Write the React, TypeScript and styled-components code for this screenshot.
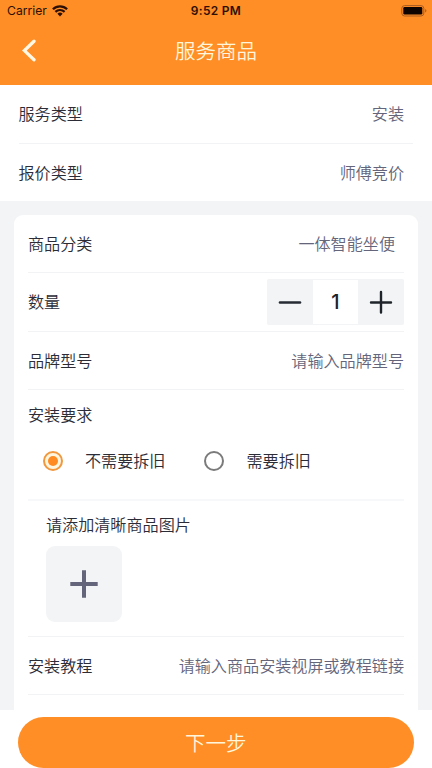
import React, { useState } from 'react';
import styled, { createGlobalStyle } from 'styled-components';

const GlobalStyle = createGlobalStyle`
  * { box-sizing: border-box; }
  body { margin: 0; overflow: hidden; }
  button { border: 0; padding: 0; font: inherit; background: none; }
`;

const Screen = styled.div`
  width: 432px;
  height: 768px;
  display: flex;
  flex-direction: column;
  overflow: hidden;
  background: #f2f4f6;
  color: #2b2c36;
  font: 350 16.1px/24px 'Noto Sans CJK SC', sans-serif;
`;

const Header = styled.header`
  flex: none;
  height: 85px;
  background: #ff8e26;
`;

const StatusBar = styled.div`
  height: 22px;
  padding: 0 5px 0 7px;
  display: grid;
  grid-template-columns: 1fr auto 1fr;
  align-items: center;
  color: #2e0f05;
  font: 400 12.2px/22px Inter, sans-serif;
`;

const Carrier = styled.div`
  display: flex;
  align-items: center;
  gap: 5px;
`;

const Clock = styled.div`
  margin-right: 2px;
  font-weight: 600;
  font-size: 11.9px;
  letter-spacing: 0.35px;
`;

const Battery = styled.div`
  display: flex;
  justify-content: flex-end;
`;

const NavBar = styled.div`
  height: 55px;
  display: grid;
  grid-template-columns: 60px 1fr 60px;
  align-items: center;
`;

const BackButton = styled.button`
  height: 24px;
  padding-left: 20px;
  display: flex;
  align-items: center;
`;

const Title = styled.h1`
  margin: 0;
  text-align: center;
  color: #fff6dc;
  font-size: 20.5px;
  line-height: 30px;
  font-weight: 350;
`;

const Summary = styled.section`
  flex: none;
  height: 116px;
  padding: 0 19px 0 18.5px;
  background: #fff;
`;

const Card = styled.section`
  flex: none;
  height: 495px;
  margin: 14px 14px 0;
  padding: 0 14px;
  border-radius: 9px 9px 0 0;
  background: #fff;
`;

const Row = styled.div<{ $inset?: number; $last?: boolean; $height?: number }>`
  height: ${(p) => p.$height ?? 58}px;
  padding-right: ${(p) => p.$inset ?? 0}px;
  display: flex;
  align-items: center;
  justify-content: space-between;
  border-bottom: ${(p) => (p.$last ? 0 : 1)}px solid #f2f3f5;
`;

const Label = styled.span`
  margin-bottom: 2px;
`;

const Value = styled(Label)`
  color: #64657a;
`;

const Stepper = styled.div`
  width: 137px;
  height: 46px;
  display: grid;
  grid-template-columns: 46px 1fr 46px;
  border-radius: 2px;
  overflow: hidden;
  background: #f2f4f6;
`;

const StepButton = styled.button`
  display: grid;
  place-items: center;
`;

const Quantity = styled.div`
  margin: 1px 0;
  display: grid;
  place-items: center;
  background: #fff;
  color: #20222a;
  font: 500 20px/44px Inter, sans-serif;
`;

const Requirements = styled.div`
  height: 111px;
  padding-top: 12px;
  border-bottom: 2px solid #f7f8f9;
`;

const Options = styled.div`
  display: flex;
  gap: 39px;
  padding: 22px 0 0 15px;
`;

const Option = styled.label`
  display: flex;
  align-items: center;
  gap: 22px;
`;

const Radio = styled.span<{ $on: boolean }>`
  width: 20px;
  height: 20px;
  display: grid;
  place-items: center;
  border: 2px solid ${(p) => (p.$on ? '#f1983f' : '#7b7b7b')};
  border-radius: 50%;
  background: ${(p) => (p.$on ? '#fff6df' : '#fff')};
`;

const Dot = styled.span`
  width: 10px;
  height: 10px;
  border-radius: 50%;
  background: #ff8b22;
`;

const Upload = styled.div`
  height: 136px;
  padding: 11px 0 0 18px;
  border-bottom: 1px solid #f2f3f5;
`;

const UploadTile = styled.button`
  width: 76px;
  height: 76px;
  margin-top: 10px;
  display: grid;
  place-items: center;
  border-radius: 9px;
  background: #f2f4f6;
`;

const Footer = styled.footer`
  flex: 1;
  padding: 7px 18.5px 0 18px;
  background: #fff;
`;

const NextButton = styled.button`
  width: 395.5px;
  height: 51px;
  padding-bottom: 1px;
  display: block;
  border-radius: 26px;
  background: #ff8e26;
  color: #fff6dc;
  font-size: 20.5px;
  line-height: 50px;
`;

const WifiIcon = () => (
  <svg width="16" height="12" viewBox="0 0 16 12">
    <g fill="none" stroke="#2e0f05" strokeWidth="2.2">
      <path d="M.9 4.2a10.1 10.1 0 0 1 14.2 0" />
      <path d="M3.4 6.9a6.5 6.5 0 0 1 9.2 0" />
    </g>
    <path d="M5.4 8.8a3.7 3.7 0 0 1 5.2 0L8 11.5Z" fill="#2e0f05" />
  </svg>
);

const BatteryIcon = () => (
  <svg width="26" height="12" viewBox="0 0 26 12">
    <rect x=".8" y=".6" width="22" height="10.4" rx="2.8" fill="none" stroke="#a85c20" />
    <rect x="2.3" y="2.1" width="19" height="7.4" rx="1.2" fill="#100400" />
    <path d="M24.2 4v3.6q1.2-.5 1.2-1.8T24.2 4Z" fill="#a85c20" />
  </svg>
);

const BackIcon = () => (
  <svg width="17" height="24" viewBox="0 0 17 24">
    <path d="M14 3.2 4.4 12.6l9.6 9.2" fill="none" stroke="#fff8e4" strokeWidth="3.3" strokeLinecap="round" strokeLinejoin="miter" />
  </svg>
);

const MinusIcon = () => (
  <svg width="24" height="24" viewBox="0 0 24 24">
    <path d="M2 12.5h20" stroke="#262b33" strokeWidth="2.6" strokeLinecap="round" />
  </svg>
);

const PlusIcon = () => (
  <svg width="24" height="24" viewBox="0 0 24 24">
    <path d="M2 12.5h20M12 2v20.5" stroke="#1f242b" strokeWidth="2.4" strokeLinecap="round" />
  </svg>
);

const AddIcon = () => (
  <svg width="28" height="28" viewBox="0 0 28 28">
    <path d="M.3 14h27.4M14 .3v27.4" stroke="#64657a" strokeWidth="4" />
  </svg>
);

const options = ['不需要拆旧', '需要拆旧'];

export default function App() {
  const [selected, setSelected] = useState(0);
  const [count, setCount] = useState(1);
  return (
    <Screen>
      <GlobalStyle />
      <Header>
        <StatusBar>
          <Carrier>Carrier <WifiIcon /></Carrier>
          <Clock>9:52 PM</Clock>
          <Battery><BatteryIcon /></Battery>
        </StatusBar>
        <NavBar>
          <BackButton aria-label="返回"><BackIcon /></BackButton>
          <Title>服务商品</Title>
        </NavBar>
      </Header>
      <Summary>
        <Row $inset={9} $height={59}><Label>服务类型</Label><Value>安装</Value></Row>
        <Row $inset={9} $height={57} $last><Label>报价类型</Label><Value>师傅竞价</Value></Row>
      </Summary>
      <Card>
        <Row $inset={9}><Label>商品分类</Label><Value>一体智能坐便</Value></Row>
        <Row $height={59}>
          <Label>数量</Label>
          <Stepper>
            <StepButton aria-label="减少" onClick={() => setCount(Math.max(1, count - 1))}><MinusIcon /></StepButton>
            <Quantity>{count}</Quantity>
            <StepButton aria-label="增加" onClick={() => setCount(count + 1)}><PlusIcon /></StepButton>
          </Stepper>
        </Row>
        <Row><Label>品牌型号</Label><Value>请输入品牌型号</Value></Row>
        <Requirements>
          <div>安装要求</div>
          <Options>
            {options.map((text, i) => (
              <Option key={text} onClick={() => setSelected(i)}>
                <Radio $on={selected === i}>{selected === i && <Dot />}</Radio>
                <Label>{text}</Label>
              </Option>
            ))}
          </Options>
        </Requirements>
        <Upload>
          <div>请添加清晰商品图片</div>
          <UploadTile aria-label="添加图片"><AddIcon /></UploadTile>
        </Upload>
        <Row><Label>安装教程</Label><Value>请输入商品安装视屏或教程链接</Value></Row>
      </Card>
      <Footer><NextButton>下一步</NextButton></Footer>
    </Screen>
  );
}
